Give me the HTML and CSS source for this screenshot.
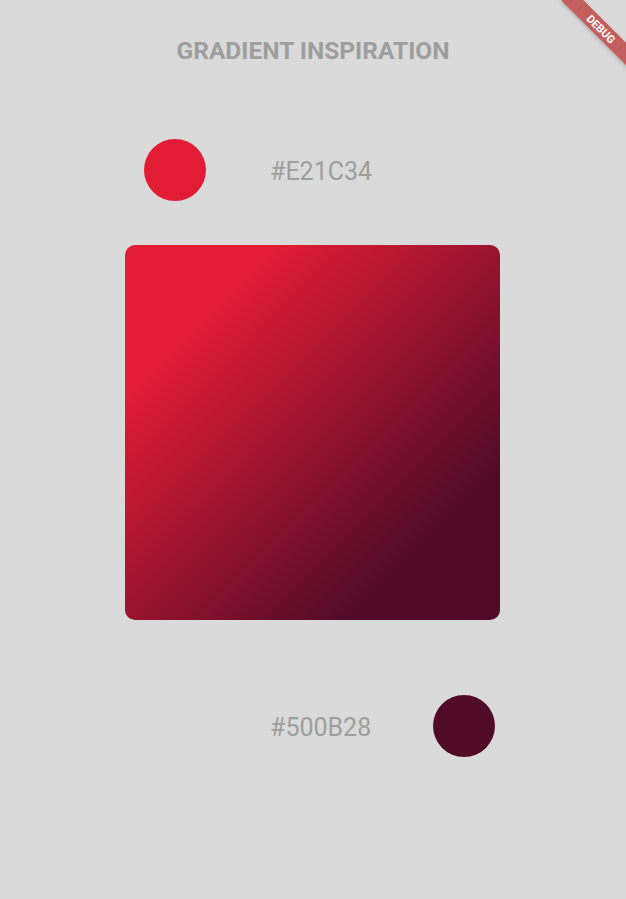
FILE: index.html
```html
<!DOCTYPE html>
<html>
<head>
<meta charset="utf-8">
<link rel="stylesheet" href="styles.css">
</head>
<body>
<div class="page">
  <h1 class="title">GRADIENT INSPIRATION</h1>
  <div class="row row-top">
    <div class="dot dot-start"></div>
    <span class="hex">#E21C34</span>
  </div>
  <div class="square"></div>
  <div class="row row-bottom">
    <span class="hex">#500B28</span>
    <div class="dot dot-end"></div>
  </div>
</div>
<div class="banner"><span>DEBUG</span></div>
</body>
</html>
```
FILE: styles.css
```css
* { box-sizing: border-box; }
html, body {
  margin: 0;
  padding: 0;
  background: #dadada;
  width: 626px;
  height: 899px;
  overflow: hidden;
  font-family: Roboto, "Liberation Sans", sans-serif;
}
.page {
  display: flex;
  flex-direction: column;
  align-items: center;
  padding-top: 36px;
}
.title {
  margin: 0;
  font-size: 24.5px;
  font-weight: 700;
  color: #9e9e9e;
  line-height: 30px;
}
.row {
  display: flex;
  align-items: center;
  width: 626px;
}
.row-top {
  margin-top: 73px;
  padding-left: 144px;
  gap: 64px;
}
.row-bottom {
  margin-top: 75px;
  padding-left: 270px;
  gap: 62px;
}
.dot {
  width: 62px;
  height: 62px;
  border-radius: 50%;
  flex: none;
}
.dot-start { background: #E21C34; }
.dot-end { background: #500B28; }
.hex {
  font-size: 25px;
  color: #9e9e9e;
  line-height: 30px;
  width: 101px;
  margin-top: 4px;
  flex: none;
}
.square {
  margin-top: 44px;
  margin-right: 1px;
  width: 375px;
  height: 375px;
  border-radius: 10px;
  background: linear-gradient(135deg, #E21C34 20%, #500B28 80%);
}
.banner {
  position: absolute;
  left: 553px;
  top: 21px;
  width: 96px;
  height: 16px;
  background: rgba(183, 28, 28, 0.65);
  transform: rotate(45deg);
  display: flex;
  align-items: center;
  justify-content: center;
  box-shadow: 0 2px 4px rgba(0,0,0,0.15);
}
.banner span {
  color: #fff;
  font-size: 11px;
  font-weight: 700;
  line-height: 11px;
}
```
